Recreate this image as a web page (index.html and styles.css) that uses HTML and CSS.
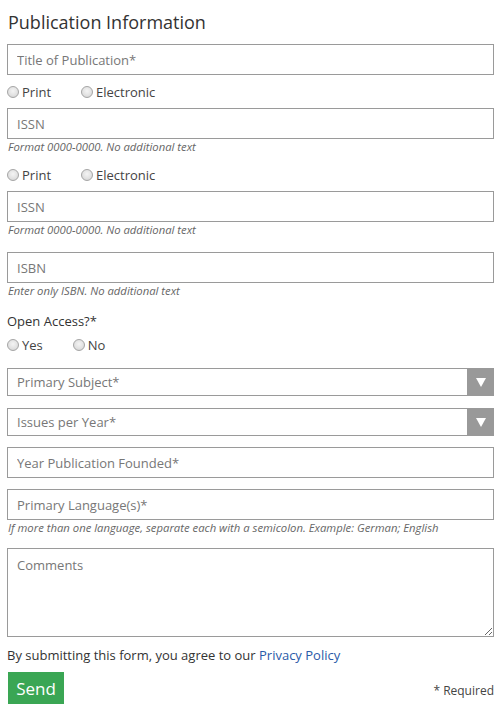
FILE: index.html
```html
<!DOCTYPE html>
<html>
<head>
<meta charset="utf-8">
<link rel="stylesheet" href="styles.css">
</head>
<body>
<form class="form">
  <h2 class="title">Publication Information</h2>
  <input class="field" type="text" placeholder="Title of Publication*">
  <div class="radios r1">
    <label class="opt"><span class="radio"></span>Print</label>
    <label class="opt"><span class="radio"></span>Electronic</label>
  </div>
  <input class="field m7" type="text" placeholder="ISSN">
  <div class="help">Format 0000-0000. No additional text</div>
  <div class="radios r2">
    <label class="opt"><span class="radio"></span>Print</label>
    <label class="opt"><span class="radio"></span>Electronic</label>
  </div>
  <input class="field m7" type="text" placeholder="ISSN">
  <div class="help">Format 0000-0000. No additional text</div>
  <input class="field m14" type="text" placeholder="ISBN">
  <div class="help">Enter only ISBN. No additional text</div>
  <div class="label">Open Access?*</div>
  <div class="radios r3">
    <label class="opt"><span class="radio"></span>Yes</label>
    <label class="opt"><span class="radio"></span>No</label>
  </div>
  <div class="select s1"><span>Primary Subject*</span><span class="arrow"></span></div>
  <div class="select s2"><span>Issues per Year*</span><span class="arrow"></span></div>
  <input class="field m11" type="text" placeholder="Year Publication Founded*">
  <input class="field m11" type="text" placeholder="Primary Language(s)*">
  <div class="help">If more than one language, separate each with a semicolon. Example: German; English</div>
  <textarea class="comments" placeholder="Comments"></textarea>
  <div class="agree">By submitting this form, you agree to our <a class="link" href="#">Privacy Policy</a></div>
  <div class="footer">
    <button class="send" type="button">Send</button>
    <span class="required">* Required</span>
  </div>
</form>
</body>
</html>
```

FILE: styles.css
```css
* { box-sizing: border-box; }
html, body { margin: 0; padding: 0; background: #fff; }
body {
  font-family: "Open Sans", "Noto Sans", sans-serif;
  color: #333;
  font-size: 13px;
}
.form {
  display: flex;
  flex-direction: column;
  padding: 0 8px 0 7px;
}
.title {
  margin: 0 0 8px 1px;
  padding-top: 8px;
  font-size: 18px;
  line-height: 28px;
  font-weight: 400;
  color: #333;
}
.field {
  display: block;
  width: 100%;
  height: 31px;
  margin: 0;
  border: 1px solid #9a9a9a;
  border-radius: 0;
  padding: 0 9px;
  font-family: inherit;
  font-size: 13px;
  color: #333;
  background: #fff;
  outline: none;
}
.field::placeholder, .comments::placeholder { color: #777; opacity: 1; }
.m7 { margin-top: 7px; }
.m11 { margin-top: 11px; }
.m14 { margin-top: 14px; }
.radios {
  display: flex;
  align-items: center;
  height: 18px;
}
.r1 { margin-top: 8px; }
.r2 { margin-top: 11px; }
.r3 { margin-top: 6px; }
.opt {
  display: flex;
  align-items: center;
  margin-right: 30px;
  color: #444;
  font-size: 13px;
}
.radio {
  width: 12px;
  height: 12px;
  border-radius: 50%;
  border: 1px solid #a5a5a5;
  background: radial-gradient(circle at 50% 40%, #f4f4f4 0%, #e2e2e2 55%, #cfcfcf 100%);
  margin-right: 3px;
  flex: none;
}
.help {
  font-size: 11.3px;
  font-style: italic;
  line-height: 16px;
  color: #666;
  margin-left: 1px;
}
.label {
  margin-top: 13px;
  line-height: 18px;
  font-size: 13px;
  color: #333;
}
.select {
  display: flex;
  align-items: center;
  justify-content: space-between;
  height: 28px;
  border: 1px solid #9a9a9a;
  padding-left: 9px;
  color: #777;
  font-size: 13px;
  position: relative;
}
.s1 { margin-top: 14px; }
.s2 { margin-top: 12px; }
.arrow {
  align-self: stretch;
  width: 27px;
  margin: -1px -1px -1px 0;
  background: #999;
  display: flex;
  align-items: center;
  justify-content: center;
}
.arrow::after {
  content: "";
  width: 0;
  height: 0;
  border-left: 5px solid transparent;
  border-right: 5px solid transparent;
  border-top: 9px solid #fff;
}
.comments {
  display: block;
  margin-top: 12px;
  width: 100%;
  height: 89px;
  border: 1px solid #9a9a9a;
  border-radius: 0;
  padding: 7px 9px;
  font-family: inherit;
  font-size: 13px;
  resize: both;
  outline: none;
}
.agree {
  margin-top: 9px;
  line-height: 18px;
  font-size: 13px;
  color: #333;
}
.link { color: #2a5aa8; text-decoration: none; }
.footer {
  margin-top: 8px;
  display: flex;
  align-items: flex-end;
  justify-content: space-between;
}
.send {
  margin-left: 1px;
  width: 56px;
  height: 32px;
  border: none;
  border-radius: 0;
  background: #3aa654;
  color: #fff;
  font-family: inherit;
  font-size: 17px;
  padding: 0;
}
.required {
  font-size: 12px;
  color: #444;
  line-height: 16px;
  margin-bottom: 5px;
}
```
